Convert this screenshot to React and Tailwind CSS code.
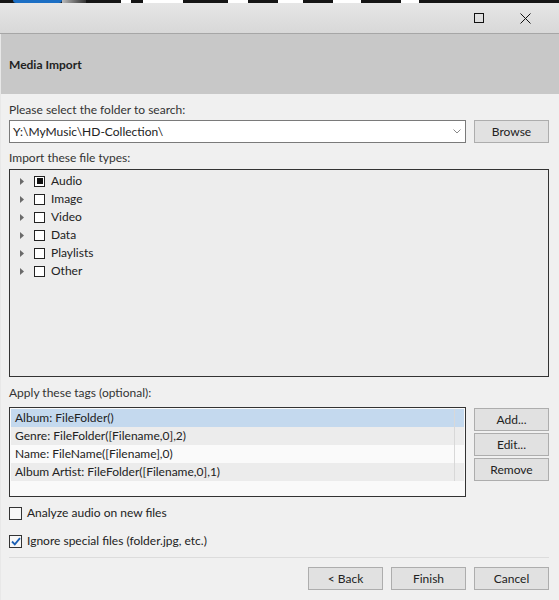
import React from "react";

const FONT = { fontFamily: "Lato, 'Noto Sans', sans-serif" };

const FILE_TYPES = [
  { label: "Audio", state: "mixed" },
  { label: "Image", state: "off" },
  { label: "Video", state: "off" },
  { label: "Data", state: "off" },
  { label: "Playlists", state: "off" },
  { label: "Other", state: "off" },
];

const TAGS = [
  "Album: FileFolder()",
  "Genre: FileFolder([Filename,0],2)",
  "Name: FileName([Filename],0)",
  "Album Artist: FileFolder([Filename,0],1)",
];

function WinButton({ children }) {
  return (
    <button className="h-[23px] w-[75px] shrink-0 border border-[#adadad] bg-[#e1e1e1] text-[12px] text-[#222] leading-none">
      {children}
    </button>
  );
}

function TreeRow({ label, state }) {
  return (
    <div className="flex h-[18px] items-center">
      <svg width="4" height="7" viewBox="0 0 4 7" className="ml-[10px] mr-[10px]">
        <path d="M0 0 L4 3.5 L0 7 Z" fill="#6a6a6a" />
      </svg>
      <div className="flex h-[11px] w-[11px] items-center justify-center border-[1.5px] border-[#222] bg-white">
        {state === "mixed" && <div className="h-[6px] w-[6px] bg-[#111]" />}
      </div>
      <span className="ml-[6px] text-[12px] text-[#222]">{label}</span>
    </div>
  );
}

function CheckOption({ checked, children }) {
  return (
    <div className="flex h-[16px] items-center">
      <div className="flex h-[13px] w-[13px] items-center justify-center border border-[#333] bg-[#f7f7f7]">
        {checked && (
          <svg width="10" height="9" viewBox="0 0 10 9">
            <path d="M1 4.5 L3.8 7.3 L9 1.2" fill="none" stroke="#1a5fb4" strokeWidth="1.8" />
          </svg>
        )}
      </div>
      <span className="ml-[5px] text-[12px] leading-[16px] text-[#222]">{children}</span>
    </div>
  );
}

export default function App() {
  return (
    <div className="flex h-[600px] w-[559px] flex-col bg-[#f0f0f0]" style={FONT}>
      {/* sliver of whatever sits behind the window */}
      <div className="flex h-[3px] shrink-0 bg-[#151515]">
        <div className="ml-[13px] w-[49px] rounded-b-full bg-[#1c6fc4]" />
        <div className="w-[24px] bg-gradient-to-r from-[#bbb] to-[#333]" />
        <div className="ml-[35px] w-[10px] bg-white" />
        <div className="ml-[12px] w-[40px] bg-white" />
        <div className="ml-[45px] w-[20px] bg-white" />
        <div className="ml-[30px] w-[25px] bg-white" />
        <div className="ml-[30px] w-[28px] bg-white" />
        <div className="ml-[40px] w-[18px] bg-white" />
      </div>

      {/* title bar */}
      <div className="flex h-[31px] shrink-0 items-center justify-end border-b border-[#a6a6a6] bg-gradient-to-b from-[#e6e6e6] to-[#d8d8d8]">
        <div className="flex h-full w-[46px] items-center justify-center">
          <div className="h-[10px] w-[10px] border border-[#111]" />
        </div>
        <div className="flex h-full w-[46px] items-center justify-center mr-[11px]">
          <svg width="11" height="11" viewBox="0 0 11 11">
            <path d="M0.5 0.5 L10.5 10.5 M10.5 0.5 L0.5 10.5" stroke="#111" strokeWidth="1" />
          </svg>
        </div>
      </div>

      {/* header band */}
      <div className="flex h-[60px] shrink-0 items-center border-l border-[#e8e8e8] bg-[#c8c8c8] pl-[8px] pt-[2px]">
        <span className="text-[12px] font-bold text-[#222]">Media Import</span>
      </div>

      {/* body */}
      <div className="flex flex-1 flex-col border-l border-[#e8e8e8] pl-[8px] pr-[10px] pt-[8px]">
        <div className="h-[16px] text-[12px] leading-[16px] text-[#333]">Please select the folder to search:</div>
        <div className="mt-[2px] flex gap-[8px]">
          <div className="flex h-[23px] flex-1 items-center justify-between border border-[#7a7a7a] bg-white pl-[3px] pr-[4px]">
            <span className="text-[12px] text-[#222]">Y:\MyMusic\HD-Collection\</span>
            <svg width="8" height="5" viewBox="0 0 8 5">
              <path d="M0.5 0.5 L4 4 L7.5 0.5" fill="none" stroke="#888" strokeWidth="1" />
            </svg>
          </div>
          <WinButton>Browse</WinButton>
        </div>

        <div className="mt-[7px] h-[16px] text-[12px] leading-[16px] text-[#333]">Import these file types:</div>
        <div className="mt-[3px] h-[208px] border border-[#333] bg-[#ededed] pt-[2px]">
          {FILE_TYPES.map((t) => (
            <TreeRow key={t.label} label={t.label} state={t.state} />
          ))}
        </div>

        <div className="mt-[8px] h-[16px] text-[12px] leading-[16px] text-[#333]">Apply these tags (optional):</div>
        <div className="mt-[6px] flex gap-[8px]">
          <div className="h-[90px] flex-1 border border-[#333] bg-[#fafafa] p-px">
            {TAGS.map((tag, i) => (
              <div
                key={tag}
                className={`flex h-[18px] items-center pl-[4px] text-[12px] text-[#222] ${
                  i === 0 ? "bg-[#c4d9ee]" : i % 2 === 1 ? "bg-[#ececec]" : "bg-[#fafafa]"
                }`}
              >
                <span className="flex-1">{tag}</span>
                <div className="mr-[9px] h-full w-px bg-[#d8d8d8]" />
              </div>
            ))}
          </div>
          <div className="flex flex-col gap-[2px] pt-px">
            <WinButton>Add...</WinButton>
            <WinButton>Edit...</WinButton>
            <WinButton>Remove</WinButton>
          </div>
        </div>

        <div className="mt-[8px] flex flex-col gap-[12px]">
          <CheckOption>Analyze audio on new files</CheckOption>
          <CheckOption checked>Ignore special files (folder.jpg, etc.)</CheckOption>
        </div>

        <div className="mt-[8px] h-px bg-[#dcdcdc]" />

        <div className="mt-[9px] flex justify-end gap-[8px]">
          <WinButton>&lt; Back</WinButton>
          <WinButton>Finish</WinButton>
          <WinButton>Cancel</WinButton>
        </div>
      </div>
    </div>
  );
}
